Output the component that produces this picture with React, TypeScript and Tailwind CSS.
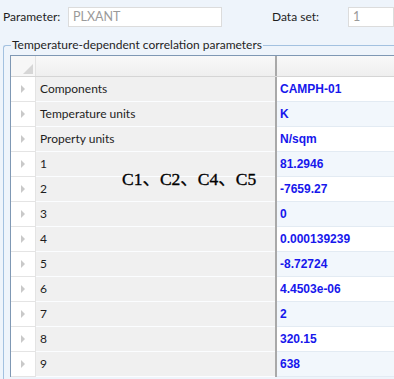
import React from "react";

type Row = { label: string; value: string };

const rows: Row[] = [
  { label: "Components", value: "CAMPH-01" },
  { label: "Temperature units", value: "K" },
  { label: "Property units", value: "N/sqm" },
  { label: "1", value: "81.2946" },
  { label: "2", value: "-7659.27" },
  { label: "3", value: "0" },
  { label: "4", value: "0.000139239" },
  { label: "5", value: "-8.72724" },
  { label: "6", value: "4.4503e-06" },
  { label: "7", value: "2" },
  { label: "8", value: "320.15" },
  { label: "9", value: "638" },
];

const Arrow = () => (
  <div className="w-0 h-0 border-y-[4px] border-y-transparent border-l-[4px] border-l-[#c9c9c9]" />
);

const App: React.FC = () => {
  return (
    <div className="relative w-[394px] h-[379px] overflow-hidden bg-[#eef4fb] text-[12px] text-[#1e1e1e] font-['Segoe_UI',Lato,sans-serif]">
      {/* top fields */}
      <div className="flex items-center h-[20px] mt-[7px]">
        <div className="w-[68px] pl-[3px]">Parameter:</div>
        <div className="w-[154px] h-[20px] bg-white border border-[#dcdcdc] flex items-center pl-[4px] text-[#9a9a9a] text-[12.5px]">
          PLXANT
        </div>
        <div className="ml-[50px] w-[76px]">Data set:</div>
        <div className="flex-1 h-[20px] bg-white border border-[#dcdcdc] flex items-center pl-[4px] text-[#9a9a9a] text-[12.5px]">
          1
        </div>
      </div>

      {/* group box */}
      <div className="relative mt-[18px] ml-[3px] border-t border-l border-[#a3c1e0] rounded-tl-[3px] h-[400px]">
        <div className="absolute -top-[9px] left-[7px] bg-[#eef4fb] px-[1px] leading-[16px]">
          Temperature-dependent correlation parameters
        </div>

        <div className="mt-[9px] ml-[6px] border-t border-l border-[#7f98b4]">
          {/* header row */}
          <div className="flex h-[21px] border-b border-[#d5d5d5] bg-[#f4f4f4]">
            <div className="relative w-[25px] shrink-0 border-r border-[#e2e2e2] bg-[#f7f7f7]">
              <svg className="absolute right-[2px] bottom-[2px]" width="10" height="10" viewBox="0 0 10 10">
                <polygon points="10,0 10,10 0,10" fill="#d6d6d6" />
              </svg>
            </div>
            <div className="w-[239px] shrink-0 bg-gradient-to-b from-[#f9f9f9] to-[#efefef]" />
            <div className="w-[2px] shrink-0 bg-[#a9a9a9]" />
            <div className="flex-1 bg-gradient-to-b from-[#f9f9f9] to-[#efefef]" />
          </div>

          {rows.map((r, i) => (
            <div key={r.label} className="flex h-[25px]">
              <div className="w-[25px] shrink-0 bg-white border-r border-b border-[#e4e4e4] flex items-center pl-[10px]">
                <Arrow />
              </div>
              <div className="w-[239px] shrink-0 bg-[#f0f0f0] border-b border-[#fbfdff] flex items-center pl-[4px]">
                {r.label}
              </div>
              <div className="w-[2px] shrink-0 bg-[#a9a9a9]" />
              <div
                className={
                  "flex-1 flex items-center pl-[3px] border-b border-[#e3ebf3] font-['Liberation_Sans',Arial,sans-serif] font-bold text-[12px] text-[#1717ec] " +
                  (i % 2 === 0 ? "bg-white" : "bg-[#f2f7fc]")
                }
              >
                {r.value}
              </div>
            </div>
          ))}
        </div>
      </div>

      {/* annotation */}
      <div className="absolute left-[122px] top-[168px] text-[17.5px] leading-[22px] text-black [-webkit-text-stroke:0.35px_black] font-['Liberation_Serif','Noto_Sans_CJK_SC',serif]">
        C1、C2、C4、C5
      </div>
    </div>
  );
};

export default App;
